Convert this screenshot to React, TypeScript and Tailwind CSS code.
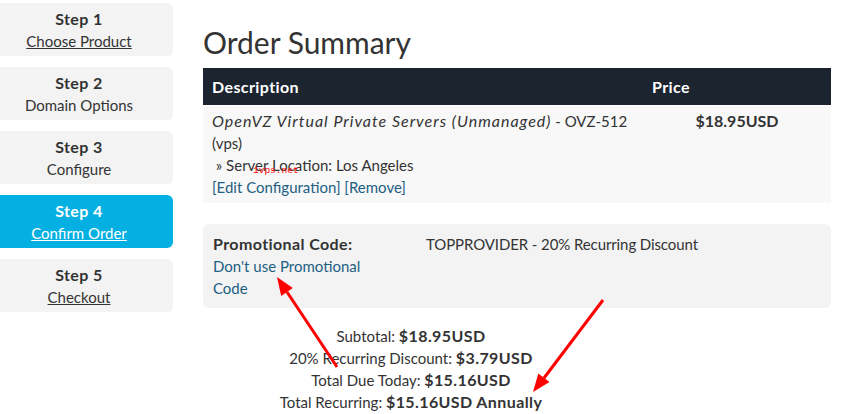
const steps = [
  { n: 1, label: 'Choose Product', link: true },
  { n: 2, label: 'Domain Options', link: false },
  { n: 3, label: 'Configure', link: false },
  { n: 4, label: 'Confirm Order', link: true, active: true },
  { n: 5, label: 'Checkout', link: true },
];

function Sidebar() {
  return (
    <aside className="-ml-[15px] flex w-[188px] shrink-0 flex-col gap-[11px] pt-[3px]">
      {steps.map((s) => (
        <div
          key={s.n}
          className={
            s.active
              ? 'flex h-[53px] flex-col items-center justify-center rounded-md bg-[#03b0e1] text-white'
              : 'flex h-[53px] flex-col items-center justify-center rounded-md bg-[#f3f3f3] text-[#333]'
          }
        >
          <div className="text-[16px] font-bold leading-[22px] tracking-[0.4px]">Step {s.n}</div>
          <div className={s.link ? 'text-[15px] leading-[22px] underline' : 'text-[15px] leading-[22px]'}>
            {s.label}
          </div>
        </div>
      ))}
    </aside>
  );
}

function Arrows() {
  return (
    <svg className="pointer-events-none absolute left-0 top-0" width="854" height="414">
      <line x1="337" y1="367" x2="287" y2="292" stroke="#ff0000" strokeWidth="3" />
      <polygon points="277,277 292.8,288.1 281.2,295.9" fill="#ff0000" />
      <line x1="603" y1="300" x2="544" y2="378" stroke="#ff0000" strokeWidth="3" />
      <polygon points="533,392 549.5,381.9 538.3,373.5" fill="#ff0000" />
    </svg>
  );
}

const bold = 'text-[16px] font-bold tracking-[0.4px]';

export default function App() {
  return (
    <div className="relative flex h-[414px] w-[854px] gap-[30px] overflow-hidden bg-white font-['Lato',sans-serif] text-[15px] text-[#333]">
      <Sidebar />
      <main className="w-[628px] shrink-0">
        <h1 className="mt-[24px] h-[44px] text-[30px] leading-[36px] text-[#333]">Order Summary</h1>

        <div className={`flex h-[37px] items-center bg-[#1c2430] text-white ${bold}`}>
          <div className="w-[440px] pl-[9px]">Description</div>
          <div className="pl-[9px]">Price</div>
        </div>
        <div className="mt-px flex bg-[#f8f8f8] pb-[5px] pt-[4px] leading-[22px]">
          <div className="w-[440px] pl-[9px]">
            <div className="whitespace-nowrap">
              <em className="text-[16px] tracking-[1px]">OpenVZ Virtual Private Servers (Unmanaged)</em> - OVZ-512
            </div>
            <div>(vps)</div>
            <div>&nbsp;» Server Location: Los Angeles</div>
            <div className="text-[#1d5f82]">[Edit Configuration] [Remove]</div>
          </div>
          <div className={`flex-1 text-center ${bold} tracking-[0px]`}>$18.95USD</div>
        </div>

        <div className="mt-[21px] flex rounded-md bg-[#f3f3f3] py-[9px] leading-[22px]">
          <div className="w-[213px] pl-[10px]">
            <div className={bold}>Promotional Code:</div>
            <div className="text-[#1d5f82]">
              Don't use Promotional
              <br />
              Code
            </div>
          </div>
          <div className="pl-[10px] tracking-[-0.1px]">TOPPROVIDER - 20% Recurring Discount</div>
        </div>

        <div className="mt-[17px] w-[416px] text-center leading-[22px]">
          <div>
            Subtotal: <b className={bold}>$18.95USD</b>
          </div>
          <div>
            20% Recurring Discount: <b className={bold}>$3.79USD</b>
          </div>
          <div>
            Total Due Today: <b className={bold}>$15.16USD</b>
          </div>
          <div>
            Total Recurring: <b className={bold}>$15.16USD Annually</b>
          </div>
        </div>
      </main>

      <div className="absolute left-[253px] top-[166px] font-['Liberation_Mono',monospace] text-[9.5px] leading-[10px] text-[#ff0000]">
        1vps.net
      </div>
      <Arrows />
    </div>
  );
}
